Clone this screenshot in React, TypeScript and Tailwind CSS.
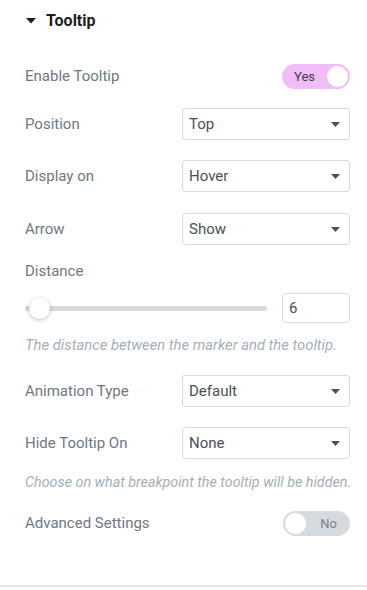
import React from "react";

function Caret() {
  return (
    <svg width="9" height="5" viewBox="0 0 9 5" className="shrink-0">
      <path d="M0 0 L9 0 L4.5 5 Z" fill="#4b5157" />
    </svg>
  );
}

function Select({ value }: { value: string }) {
  return (
    <div className="flex h-[32px] w-[168px] items-center justify-between rounded-[3px] border border-[#d5dadf] bg-white pl-[6px] pr-[9px] text-[15px] text-[#495157]">
      <span>{value}</span>
      <Caret />
    </div>
  );
}

function SelectRow({ label, value, className = "" }: any) {
  return (
    <div className={`flex h-[32px] items-center justify-between ${className}`}>
      <span className="text-[15px] text-[#6d7882]">{label}</span>
      <Select value={value} />
    </div>
  );
}

export default function App() {
  return (
    <div
      className="relative h-[590px] w-[367px] bg-white"
      style={{ fontFamily: "Roboto, 'Liberation Sans', sans-serif" }}
    >
      <div className="pl-[25px] pr-[17px]">
        {/* HEADER */}
        <div className="box-content flex h-[26px] items-center pt-[8px]">
          <svg width="10" height="6" viewBox="0 0 10 6" className="ml-[1px]">
            <path d="M0 0 L10 0 L5 5.5 Z" fill="#1c1d1f" />
          </svg>
          <span className="ml-[10px] text-[16px] font-bold text-[#1c1d1f]">
            Tooltip
          </span>
        </div>

        {/* ENABLE TOOLTIP */}
        <div className="mt-[30px] flex h-[25px] items-center justify-between">
          <span className="text-[15px] text-[#6d7882]">Enable Tooltip</span>
          <div className="flex h-[25px] w-[68px] items-center justify-between rounded-full bg-[#f1bdf8] pl-[12px] pr-[1px]">
            <span className="text-[13px] text-[#3d3f43]">Yes</span>
            <div className="h-[23px] w-[23px] rounded-full border border-[#efb8f6] bg-white" />
          </div>
        </div>

        <SelectRow label="Position" value="Top" className="mt-[19px]" />
        <SelectRow label="Display on" value="Hover" className="mt-[20px]" />
        <SelectRow label="Arrow" value="Show" className="mt-[21px]" />

        {/* DISTANCE */}
        <div className="mt-[17px] text-[15px] leading-[18px] text-[#6d7882]">
          Distance
        </div>
        <div className="mt-[13px] flex h-[30px] items-center justify-between">
          <div className="relative flex h-[21px] w-[242px] items-center">
            <div className="h-[5px] w-full rounded-full bg-[#d5dadf]" />
            <div className="absolute left-[4px] top-0 h-[21px] w-[21px] rounded-full bg-white shadow-[0_1px_4px_rgba(0,0,0,0.25)]" />
          </div>
          <div className="flex h-[30px] w-[68px] items-center rounded-[3px] border border-[#d5dadf] pl-[6px] text-[15px] text-[#495157]">
            6
          </div>
        </div>
        <div className="mt-[13px] whitespace-nowrap text-[14.8px] italic leading-[18px] text-[#a4afb7]">
          The distance between the marker and the tooltip.
        </div>

        <SelectRow label="Animation Type" value="Default" className="mt-[21px]" />
        <SelectRow label="Hide Tooltip On" value="None" className="mt-[20px]" />
        <div className="mt-[14px] whitespace-nowrap text-[14.3px] italic leading-[18px] text-[#a4afb7]">
          Choose on what breakpoint the tooltip will be hidden.
        </div>

        {/* ADVANCED */}
        <div className="mt-[20px] flex h-[25px] items-center justify-between">
          <span className="text-[15px] text-[#6d7882]">Advanced Settings</span>
          <div className="flex h-[25px] w-[67px] items-center justify-between rounded-full bg-[#d5dadf] pl-[1px] pr-[13px]">
            <div className="h-[23px] w-[23px] rounded-full border border-[#d5dadf] bg-white" />
            <span className="text-[13px] text-[#7a8189]">No</span>
          </div>
        </div>
      </div>

      <div className="absolute bottom-[3px] left-0 h-[2px] w-full bg-[#e6e8ea]" />
    </div>
  );
}
